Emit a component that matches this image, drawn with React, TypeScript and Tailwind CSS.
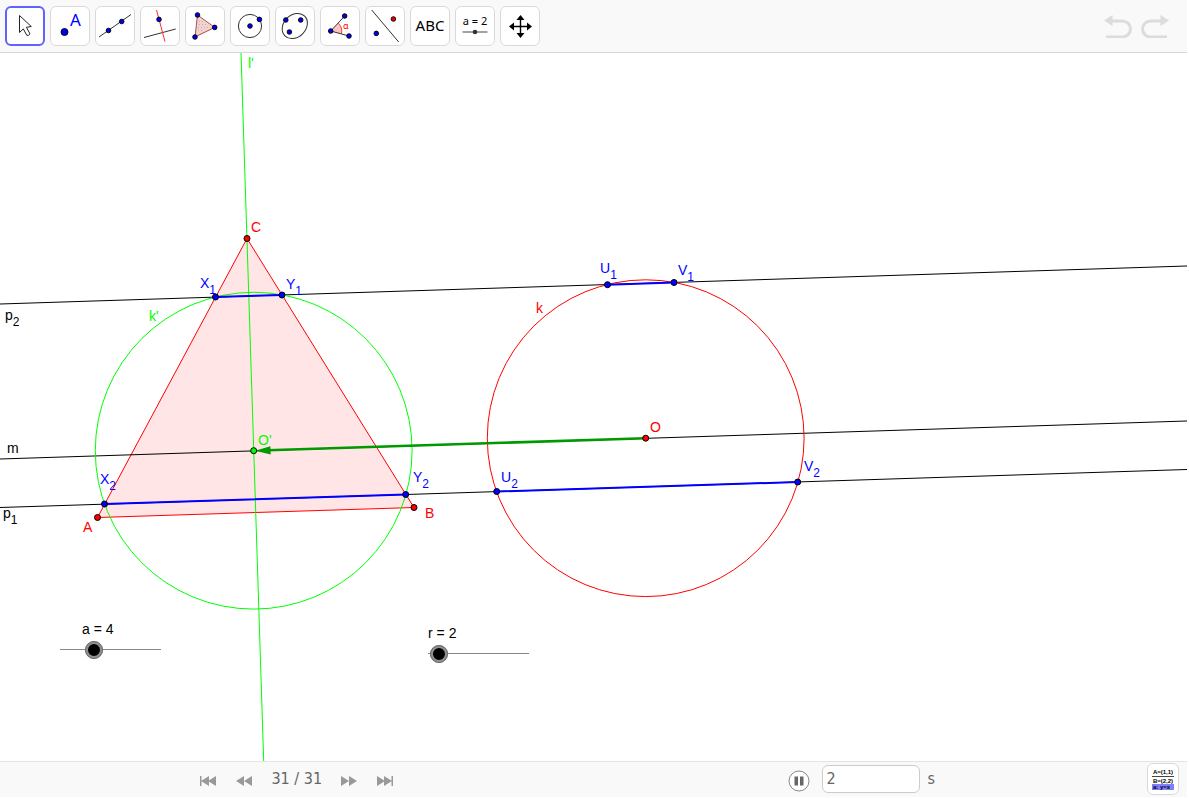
import { useState, type ReactNode } from "react";

const BLUE = "#0000ff";
const RED = "#ff0000";
const GREEN = "#00ff00";

type DotProps = { x: number; y: number; r?: number; fill?: string };

const Dot = ({ x, y, r = 2.3, fill = "#0000ee" }: DotProps) => (
  <circle cx={x} cy={y} r={r} fill={fill} stroke="#000" strokeWidth={0.9} />
);

const iconFont = "font-['Noto_Sans',sans-serif]";

const tools: { name: string; icon: ReactNode }[] = [
  {
    name: "Move",
    icon: (
      <path
        d="M14.5 9.5V26.5l3.8-3.6 3.5 6.400q1.800.8 3.200-1.400l-3.600-6.600 4.900-.8z"
        fill="#fff"
        stroke="#222"
        strokeWidth={1}
      />
    ),
  },
  {
    name: "Point",
    icon: (
      <>
        <Dot x={14.5} y={26} r={3.5} />
        <text x={20} y={20} fontSize={17} fill={BLUE} className={iconFont}>
          A
        </text>
      </>
    ),
  },
  {
    name: "Line",
    icon: (
      <>
        <path d="M4 31L36 8.5" stroke="#333" />
        <Dot x={13.5} y={24.5} />
        <Dot x={26.7} y={15.5} />
      </>
    ),
  },
  {
    name: "Perpendicular line",
    icon: (
      <>
        <path d="M4 31.5L35.7 23" stroke="#333" />
        <path d="M16.5 4L25 35.7" stroke="#ff2a2a" />
        <Dot x={19} y={13.4} />
      </>
    ),
  },
  {
    name: "Polygon",
    icon: (
      <>
        <path
          d="M12.5 9L29.7 21.4L10 31z"
          fill="#f0d2d0"
          stroke="#a2402f"
          strokeWidth={0.9}
        />
        <path
          d="M14 15.5h4M14 18.5h8M13 21.5h11M13 24.5h6"
          stroke="#c3aead"
          strokeDasharray="1 2"
        />
        <Dot x={12.5} y={9} />
        <Dot x={29.7} y={21.4} />
        <Dot x={10} y={31} />
      </>
    ),
  },
  {
    name: "Circle",
    icon: (
      <>
        <circle cx={20} cy={20} r={11.6} fill="none" stroke="#333" />
        <Dot x={20} y={20} />
        <Dot x={29.4} y={13.4} />
      </>
    ),
  },
  {
    name: "Conic",
    icon: (
      <>
        <ellipse
          cx={19.8}
          cy={20}
          rx={14}
          ry={11}
          transform="rotate(-45 19.8 20)"
          fill="none"
          stroke="#333"
        />
        <Dot x={10.8} y={14} />
        <Dot x={25.7} y={14} />
        <Dot x={14.4} y={26} />
      </>
    ),
  },
  {
    name: "Angle",
    icon: (
      <>
        <path
          d="M10.7 25L18.3 17.2A11 11 0 0 1 21.4 27.7z"
          fill="#f8c4c4"
        />
        <path
          d="M18.3 17.2A11 11 0 0 1 21.4 27.7"
          fill="none"
          stroke="#ff3a3a"
        />
        <path d="M24.7 10L10.7 25L29 30" fill="none" stroke="#333" />
        <Dot x={24.7} y={10} />
        <Dot x={10.7} y={25} />
        <Dot x={29} y={30} />
        <text x={23} y={23} fontSize={9} fill={RED} className={iconFont}>
          α
        </text>
      </>
    ),
  },
  {
    name: "Reflect about line",
    icon: (
      <>
        <path d="M6.7 4L33.7 36" stroke="#333" />
        <Dot x={28.4} y={13} fill="#ee0000" />
        <Dot x={11.3} y={27.4} />
      </>
    ),
  },
  {
    name: "Text",
    icon: (
      <text x={20} y={25} fontSize={15} textAnchor="middle" className={iconFont}>
        ABC
      </text>
    ),
  },
  {
    name: "Slider",
    icon: (
      <>
        <text x={20} y={19} fontSize={11} textAnchor="middle" className={iconFont}>
          a = 2
        </text>
        <path d="M7.5 26h25" stroke="#444" />
        <circle cx={20} cy={26} r={2.3} fill="#333" />
      </>
    ),
  },
  {
    name: "Move graphics view",
    icon: (
      <>
        <path d="M12 20.5h17M20.5 12v17" stroke="#000" strokeWidth={1.4} />
        <path d="M20.5 9l4 5h-8zM20.5 32l4-5h-8zM9 20.5l5-4v8zM32 20.5l-5-4v8z" />
      </>
    ),
  },
];

const Toolbar = () => {
  const [selected, setSelected] = useState("Move");

  return (
    <header className="flex items-center justify-between border-b border-[#d8d8d8] bg-[#f9f9f9] py-1.5 pr-[18px] pl-[5px]">
      <div className="flex gap-[5px]">
        {tools.map(({ name, icon }) => (
          <button
            key={name}
            aria-label={name}
            onClick={() => setSelected(name)}
            className={`size-10 rounded-md bg-white ${
              selected === name
                ? "outline-2 -outline-offset-2 outline-[#6161ff]"
                : "outline-1 -outline-offset-1 outline-[#d9d9d9]"
            }`}
          >
            <svg viewBox="0 0 40 40" className="size-10">
              {icon}
            </svg>
          </button>
        ))}
      </div>
      <div className="flex gap-[9px]">
        <button aria-label="Undo">
          <svg viewBox="0 0 28 24" className="h-6 w-7">
            <path d="M0 6.5L8.5 1v11z" fill="#dcdcdc" />
            <path
              d="M7 7h11.5a8 8 0 0 1 0 16H2"
              fill="none"
              stroke="#dcdcdc"
              strokeWidth={3}
            />
          </svg>
        </button>
        <button aria-label="Redo">
          <svg viewBox="0 0 28 24" className="h-6 w-7">
            <path d="M28 6.5L19.5 1v11z" fill="#dcdcdc" />
            <path
              d="M21 7H9.5a8 8 0 0 0 0 16H26"
              fill="none"
              stroke="#dcdcdc"
              strokeWidth={3}
            />
          </svg>
        </button>
      </div>
    </header>
  );
};

// canvas coordinates, origin in the top left corner of the graphics view
const points = [
  { x: 97.5, y: 464.5, fill: RED },
  { x: 414, y: 454.5, fill: RED },
  { x: 247, y: 185.5, fill: RED },
  { x: 645.7, y: 385.2, fill: RED },
  { x: 253.7, y: 397.7, fill: GREEN },
  { x: 215.5, y: 244, fill: BLUE },
  { x: 282, y: 242, fill: BLUE },
  { x: 104.5, y: 451, fill: BLUE },
  { x: 405.7, y: 441.5, fill: BLUE },
  { x: 607.5, y: 231.7, fill: BLUE },
  { x: 674, y: 229.5, fill: BLUE },
  { x: 496.7, y: 438.5, fill: BLUE },
  { x: 797.7, y: 429, fill: BLUE },
];

const labels = [
  { x: 248, y: 15, text: "l'", fill: GREEN },
  { x: 149, y: 268, text: "k'", fill: GREEN },
  { x: 258, y: 392, text: "O'", fill: GREEN },
  { x: 251, y: 179, text: "C", fill: RED },
  { x: 83, y: 479, text: "A", fill: RED },
  { x: 425, y: 465, text: "B", fill: RED },
  { x: 650, y: 379, text: "O", fill: RED },
  { x: 536, y: 260, text: "k", fill: RED },
  { x: 200, y: 235, text: "X", sub: "1", fill: BLUE },
  { x: 286, y: 236, text: "Y", sub: "1", fill: BLUE },
  { x: 100, y: 431, text: "X", sub: "2", fill: BLUE },
  { x: 413, y: 429, text: "Y", sub: "2", fill: BLUE },
  { x: 600, y: 220, text: "U", sub: "1", fill: BLUE },
  { x: 678, y: 222, text: "V", sub: "1", fill: BLUE },
  { x: 501, y: 429, text: "U", sub: "2", fill: BLUE },
  { x: 804, y: 418, text: "V", sub: "2", fill: BLUE },
  { x: 5, y: 267, text: "p", sub: "2", fill: "#000" },
  { x: 7, y: 400, text: "m", fill: "#000" },
  { x: 3, y: 465, text: "p", sub: "1", fill: "#000" },
];

const Construction = () => (
  <svg className="block size-full font-['Liberation_Sans',sans-serif] text-sm">
    <path
      d="M97.5 464.5L414 454.5L247 185.5z"
      fill={RED}
      fillOpacity={0.1}
      stroke={RED}
    />
    {/* lines p2, m and p1 run past the right edge on purpose */}
    <path
      d="M0 251L2374 175M0 406L2374 330M0 454.5L2374 378.5"
      stroke="#000"
    />
    <circle cx={253.7} cy={397.7} r={158.4} fill="none" stroke={GREEN} />
    <circle cx={645.7} cy={385.2} r={158.4} fill="none" stroke={RED} />
    <path d="M241 0L263.7 708L286.4 1416" fill="none" stroke={GREEN} />
    <path
      d="M215.5 244L282 242M104.5 451L405.7 441.5M607.5 231.7L674 229.5M496.7 438.5L797.7 429"
      stroke={BLUE}
      strokeWidth={2}
    />
    <path d="M645.7 385.2L268 397.2" stroke="#009900" strokeWidth={2.6} />
    <path d="M255 397.7L270.4 393.2L270.7 401.6z" fill="#009900" />
    {points.map((p, i) => (
      <circle
        key={i}
        cx={p.x}
        cy={p.y}
        r={3}
        fill={p.fill}
        stroke="#000"
        strokeWidth={1}
      />
    ))}
    {labels.map(({ x, y, text, sub, fill }) => (
      <text key={text + (sub ?? "")} x={x} y={y} fill={fill}>
        {text}
        {sub && (
          <tspan dy={6} className="text-xs">
            {sub}
          </tspan>
        )}
      </text>
    ))}
  </svg>
);

type SliderProps = {
  name: string;
  value: number;
  onChange: (value: number) => void;
  className: string;
};

const Slider = ({ name, value, onChange, className }: SliderProps) => (
  <div
    className={`absolute font-['Liberation_Sans',sans-serif] text-sm text-black ${className}`}
  >
    <label htmlFor={name} className="block leading-4">
      {name} = {value}
    </label>
    <input
      id={name}
      type="range"
      min={1}
      max={10}
      value={value}
      onChange={(e) => onChange(Number(e.target.value))}
      className="mt-[3px] block h-[19px] w-[119px] appearance-none bg-[linear-gradient(#888,#888)] bg-[length:101px_1px] bg-center bg-no-repeat [&::-webkit-slider-thumb]:size-[18px] [&::-webkit-slider-thumb]:appearance-none [&::-webkit-slider-thumb]:rounded-full [&::-webkit-slider-thumb]:border-3 [&::-webkit-slider-thumb]:border-[#909090] [&::-webkit-slider-thumb]:bg-black [&::-webkit-slider-thumb]:outline-1 [&::-webkit-slider-thumb]:-outline-offset-1 [&::-webkit-slider-thumb]:outline-[#6a6a6a]"
    />
  </div>
);

const NavButton = ({ name, d }: { name: string; d: string }) => (
  <button aria-label={name} className="mt-1">
    <svg viewBox="0 0 18 12" className="h-3 w-[18px]">
      <path d={d} fill="#999" />
    </svg>
  </button>
);

const StepBar = () => {
  const [seconds, setSeconds] = useState("2");

  return (
    <footer className="flex h-9 items-center border-t border-[#e4e4e4] bg-[#f9f9f9] pb-0.5 font-['DejaVu_Sans_Condensed','DejaVu_Sans',sans-serif] text-base text-[#666]">
      <nav className="flex w-1/2 items-center justify-center gap-[18px]">
        <NavButton name="First step" d="M1 1h1.5v10H1zM2 6l8-5v10zM9 6l8-5v10z" />
        <NavButton name="Previous step" d="M1 6l8-5v10zM9 6l8-5v10z" />
        <span className="leading-5">31 / 31</span>
        <NavButton name="Next step" d="M17 6L9 1v10zM9 6L1 1v10z" />
        <NavButton
          name="Last step"
          d="M17 1h-1.5v10H17zM16 6L8 1v10zM9 6L1 1v10z"
        />
      </nav>
      <div className="flex w-1/2 items-center pr-2 pl-[194px]">
        <button aria-label="Pause" className="mt-1">
          <svg viewBox="0 0 22 22" className="size-[22px]">
            <circle cx={11} cy={11} r={10} fill="#fff" stroke="#888" />
            <path d="M6.5 6.5h3.5v9h-3.5zM12 6.5h3.5v9H12z" fill="#666" />
          </svg>
        </button>
        <input
          id="seconds"
          value={seconds}
          onChange={(e) => setSeconds(e.target.value)}
          className="ml-3 h-7 w-[98px] rounded-md border border-[#ccc] bg-white px-1"
        />
        <label htmlFor="seconds" className="ml-2 leading-5">
          s
        </label>
        <button
          aria-label="Algebra input"
          className="ml-auto flex size-8 items-center justify-center rounded-md border border-[#d9d9d9] bg-white"
        >
          <svg
            viewBox="0 0 24 24"
            className="size-6 font-['Liberation_Sans',sans-serif] font-bold"
          >
            <text x={12} y={7} fontSize={6} textAnchor="middle">
              A=(1,1)
            </text>
            <path d="M1 9.5h22" stroke="#444" />
            <text x={12} y={16} fontSize={6} textAnchor="middle">
              B=(2,2)
            </text>
            <path d="M1 17h22v6H1z" fill="#8080ff" />
            <text x={2} y={22} fontSize={6}>
              a: y=x
            </text>
          </svg>
        </button>
      </div>
    </footer>
  );
};

const App = () => {
  const [a, setA] = useState(4);
  const [r, setR] = useState(2);

  return (
    <div className="flex h-screen flex-col bg-white pr-0.5 pb-px">
      <Toolbar />
      <main className="relative min-h-0 flex-1 overflow-hidden">
        <Construction />
        <Slider
          name="a"
          value={a}
          onChange={setA}
          className="top-[568px] left-[51px] [&>label]:pl-[31px]"
        />
        <Slider
          name="r"
          value={r}
          onChange={setR}
          className="top-[572px] left-[419px] [&>label]:pl-[9px]"
        />
      </main>
      <StepBar />
    </div>
  );
};

export default App;
